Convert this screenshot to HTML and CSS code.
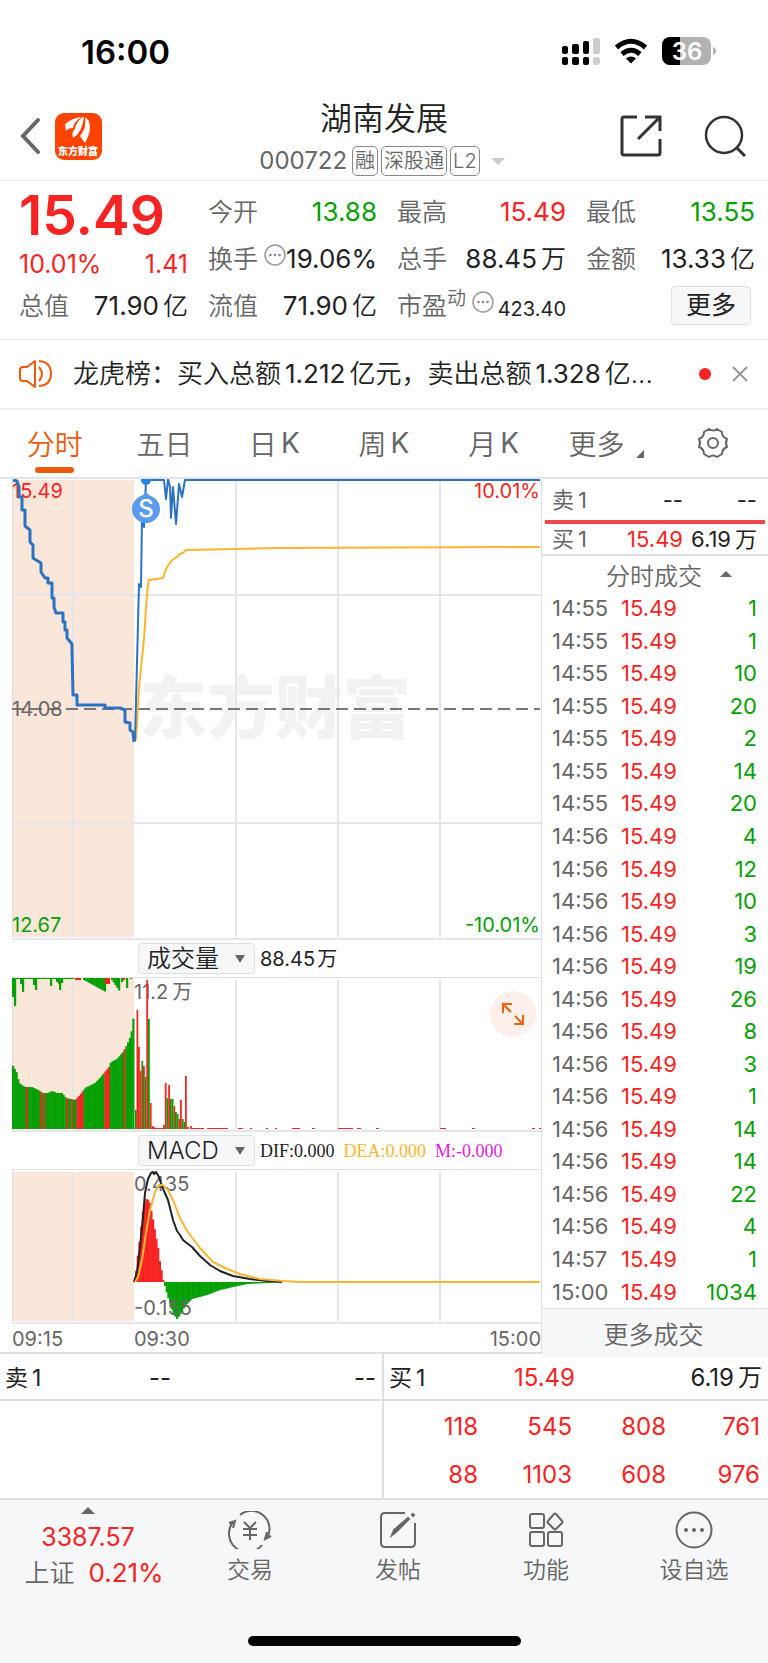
FILE: index.html
```
<!DOCTYPE html>
<html lang="zh-CN">
<head>
  <meta charset="UTF-8">
  <meta name="viewport" content="width=device-width, initial-scale=1.0">
  <title>湖南发展 000722</title>
  <link rel="stylesheet" href="styles.css">
</head>
<body>
  <div class="status">
    <span class="clock">16:00</span>
    <svg class="status-icons" width="156" height="32" viewBox="0 0 156 32">
      <g fill="#000">
        <rect x="2" y="10" width="6" height="8" rx="2"/><rect x="12" y="8" width="7" height="10" rx="2"/><rect x="23" y="5" width="6" height="13" rx="2"/>
        <rect x="2" y="21" width="6" height="8" rx="2"/><rect x="12" y="21" width="7" height="8" rx="2"/><rect x="23" y="21" width="6" height="8" rx="2"/>
      </g>
      <g fill="#ccc"><rect x="33" y="2" width="7" height="16" rx="2"/><rect x="33" y="21" width="7" height="8" rx="3"/></g>
      <g fill="none" stroke="#000" stroke-width="5">
        <path d="M56.500 11.500 Q71 -1 85.500 11.500"/>
        <path d="M62 18 Q71 10.500 80 18"/>
      </g>
      <path d="M66 22.500 Q71 18.500 76 22.500 L71 27.500 Z"/>
      <rect x="102" y="1" width="49" height="28" rx="8" fill="#b2b2b2"/>
      <path d="M110 1 H120 V29 H110 A8 8 0 0 1 102 21 V9 A8 8 0 0 1 110 1 Z"/>
      <path d="M153 11 Q156 12 156 15 Q156 18 153 19 Z" fill="#b2b2b2"/>
      <text class="battery-text" x="127" y="24" text-anchor="middle">36</text>
    </svg>
  </div>

  <header class="header">
    <div class="header-side">
      <button class="icon-btn" aria-label="返回">
        <svg width="22" height="38" viewBox="0 0 22 38"><path d="M19 3 L4 19 L19 35" fill="none" stroke="#666" stroke-width="4" stroke-linecap="round"/></svg>
      </button>
      <svg class="logo" width="47" height="47" viewBox="0 0 47 47">
        <rect width="47" height="47" rx="9" fill="#ff4300"/>
        <g fill="#fff">
          <path d="M10 11 Q17 5 27 4 Q19 8 18 15 Q13 15 11 18 Z"/>
          <path d="M28 4 Q21 9 20 16 Q16 19 18 25 Q27 20 29 4 Z"/>
          <path d="M30 4 Q32 15 25 23 L30 30 Q37 18 34 8 Z"/>
        </g>
        <text class="logo-text" x="23" y="42" text-anchor="middle">东方财富</text>
      </svg>
    </div>
    <div class="title">
      <h1>湖南发展</h1>
      <div class="code"><span>000722</span><i>融</i><i>深股通</i><i>L2</i><b class="tri-down"></b></div>
    </div>
    <div class="header-side header-right">
      <button class="icon-btn" aria-label="分享">
        <svg width="42" height="42" viewBox="0 0 42 42" fill="none" stroke="#333" stroke-width="3"><path d="M17 2 H4 Q2 2 2 4 V38 Q2 40 4 40 H38 Q40 40 40 38 V24"/><path d="M25 2 H40 V16 M40 2 L18 24"/></svg>
      </button>
      <button class="icon-btn" aria-label="搜索">
        <svg width="42" height="42" viewBox="0 0 42 42" fill="none" stroke="#333" stroke-width="2.500"><circle cx="20" cy="20" r="18"/><path d="M32 32 L41 41" stroke-width="3"/></svg>
      </button>
    </div>
  </header>

  <section class="quote">
    <div>
      <p class="price red">15.49</p>
      <p class="change red"><span>10.01%</span><span>1.41</span></p>
      <p><span class="lb">总值</span><span>71.90<em>亿</em></span></p>
    </div>
    <div>
      <p><span class="lb">今开</span><span class="green">13.88</span></p>
      <p><span class="lb">换手<svg class="dots" width="22" height="22" viewBox="0 0 22 22"><circle cx="11" cy="11" r="10" fill="none" stroke="#999" stroke-width="1.500"/><g fill="#888"><circle cx="6.500" cy="11" r="1.300"/><circle cx="11" cy="11" r="1.300"/><circle cx="15.500" cy="11" r="1.300"/></g></svg></span><span>19.06%</span></p>
      <p><span class="lb">流值</span><span>71.90<em>亿</em></span></p>
    </div>
    <div>
      <p><span class="lb">最高</span><span class="red">15.49</span></p>
      <p><span class="lb">总手</span><span>88.45<em>万</em></span></p>
      <p><span class="lb">市盈<sup>动</sup><svg class="dots" width="22" height="22" viewBox="0 0 22 22"><circle cx="11" cy="11" r="10" fill="none" stroke="#999" stroke-width="1.500"/><g fill="#888"><circle cx="6.500" cy="11" r="1.300"/><circle cx="11" cy="11" r="1.300"/><circle cx="15.500" cy="11" r="1.300"/></g></svg></span><span class="small">423.40</span></p>
    </div>
    <div>
      <p><span class="lb">最低</span><span class="green">13.55</span></p>
      <p><span class="lb">金额</span><span>13.33<em>亿</em></span></p>
      <p class="more-row"><button class="more-btn">更多</button></p>
    </div>
  </section>

  <section class="news">
    <svg width="34" height="30" viewBox="0 0 34 30" fill="none" stroke="#ee5a0a" stroke-width="2"><path d="M16 2 V28 L8 22 H4 Q1 22 1 19 V11 Q1 8 4 8 H8 Z" stroke-linejoin="round"/><path d="M20 8 Q26 15 20 22"/><path d="M20 2 Q32 3 32 15 Q32 26 20 27"/></svg>
    <a href="#">龙虎榜：买入总额<em>1.212</em>亿元，卖出总额<em>1.328</em>亿<span>...</span></a>
    <b class="dot"></b>
    <button class="icon-btn" aria-label="关闭"><svg width="18" height="18" viewBox="0 0 18 18"><path d="M2 2 L16 16 M16 2 L2 16" stroke="#999" stroke-width="2"/></svg></button>
  </section>

  <nav class="tabs">
    <button class="active">分时</button>
    <button>五日</button>
    <button>日<em>K</em></button>
    <button>周<em>K</em></button>
    <button>月<em>K</em></button>
    <button class="more-tab">更多<svg class="corner" width="8" height="8" viewBox="0 0 8 8"><path d="M8 0 V8 H0 Z" fill="#666"/></svg></button>
    <button aria-label="设置"><svg width="32" height="32" viewBox="0 0 32 32" fill="none" stroke="#666" stroke-width="2"><circle cx="16" cy="16" r="5"/><path d="M12 2 Q16 5 20 2 L25 5 Q25 10 30 12 Q28 16 30 20 Q25 22 25 27 L20 30 Q16 27 12 30 L7 27 Q7 22 2 20 Q4 16 2 12 Q7 10 7 5 Z" stroke-linejoin="round"/></svg></button>
  </nav>

  <main class="main">
    <section class="charts">
      <svg class="pane" viewBox="0 0 529 459">
        <rect x="0" y="1" width="122" height="457" fill="#fbe6da"/>
        <text class="watermark" x="127" y="254">东方财富</text>
        <path class="grid" d="M61 1 V458 M224 1 V458 M326 1 V458 M428 1 V458 M0 116 H529 M0 344 H529"/>
        <path class="edge" d="M0.500 0 V459"/>
        <path d="M0 230 H528" stroke="#777" stroke-width="2" stroke-dasharray="12 6"/>
        <text class="axis red" x="0" y="19">15.49</text>
        <text class="axis red" x="528" y="19" text-anchor="end">10.01%</text>
        <text class="axis gray" x="0" y="237">14.08</text>
        <text class="axis green" x="0" y="453">12.67</text>
        <text class="axis green" x="528" y="453" text-anchor="end">-10.01%</text>
        <g fill="none" stroke-width="2" stroke-linejoin="round">
          <polyline stroke="#ffb52b" points="124,261 127,208 132,160 134,128 136,105 137,101 151,99 154,90 159,82 166,77 168,75 171,74 174,71 224,70 268,69 528,68"/>
          <polyline stroke="#2b73c2" stroke-width="3" points="1,1 5,2 7,8 7,18 10,18 10,31 13,31 13,47 18,51 18,63 21,66 21,79 29,84 29,93 33,99 36,99 36,104 40,104 40,119 42,119 42,128 44,134 51,134 51,143 53,143 53,151 55,151 55,159 60,165 60,169 61,216 65,216 65,226 93,226 93,229 108,229 113,231 113,243 118,244 118,251 121,253 122,263"/>
          <polyline stroke="#2b73c2" points="123,262 127,105 129,108 130,38 132,48 134,1 152,1 154,20 156,0 158,8 159,39 161,8 164,45 167,5 170,18 173,1 528,1"/>
          <circle cx="134" cy="1" r="5" fill="#2f80e8"/>
          <path d="M134 13 Q136 16 141 18 A14 14 0 1 1 127 18 Q132 16 134 13 Z" fill="#5a9bee"/>
        </g>
        <text class="marker" x="134" y="38" text-anchor="middle">S</text>
      </svg>

      <div class="indicator">
        <label class="pick"><select aria-label="副图指标一"><option>成交量</option></select></label>
        <span>88.45<em>万</em></span>
      </div>
      <div class="volume">
        <svg class="pane" viewBox="0 0 529 152">
          <rect width="122" height="151" fill="#fbe6da"/>
          <path class="grid" d="M61 2 V151 M224 2 V151 M326 2 V151 M428 2 V151"/>
          <path class="edge" d="M0.500 0 V152"/>
          <text class="axis gray" x="122" y="21">11.2<tspan dx="4">万</tspan></text>
          <g id="volumeBars"></g>
        </svg>
        <button class="expand" aria-label="全屏"><svg width="24" height="24" viewBox="0 0 24 24" fill="none" stroke="#f2600c" stroke-width="2"><path d="M11 2 H2 V11 M2 2 L10 10 M22 13 V22 H13 M22 22 L14 14"/></svg></button>
      </div>

      <div class="indicator">
        <label class="pick"><select aria-label="副图指标二"><option>MACD</option></select></label>
        <span class="macd"><span>DIF:0.000</span><span class="dea">DEA:0.000</span><span class="m">M:-0.000</span></span>
      </div>
      <svg class="pane" viewBox="0 0 529 152">
        <rect y="2" width="122" height="149" fill="#fbe6da"/>
        <path class="grid" d="M61 2 V151 M224 2 V151 M326 2 V151 M428 2 V151"/>
        <path class="edge" d="M0.500 0 V152"/>
        <g id="macdBars"></g>
        <text class="axis gray" x="122" y="21">0.435</text>
        <text class="axis gray" x="122" y="145">-0.155</text>
        <g fill="none" stroke-width="2" stroke-linejoin="round">
          <polyline stroke="#222" points="122,112 125,102 128,77 131,47 133,23 136,9 139,3 141,2 142,4 144,2 147,7 149,13 152,21 156,30 159,42 161,50 165,61 168,65 171,70 180,77 188,86 198,95 208,101 221,106 238,109 255,111 270,112"/>
          <polyline stroke="#f9b531" points="123,112 126,107 130,90 134,63 138,40 143,22 147,15 151,15 156,20 161,30 168,48 175,61 188,78 201,92 215,99 228,104 248,109 271,111 288,112 528,112"/>
        </g>
      </svg>
      <div class="times"><span>09:15</span><span>09:30</span><span>15:00</span></div>
    </section>

    <aside class="side">
      <p class="ask"><span>卖<em>1</em></span><b>--</b><b>--</b></p>
      <p class="bid"><span>买<em>1</em></span><b class="red">15.49</b><b>6.19<em>万</em></b></p>
      <h2>分时成交<b class="tri-up"></b></h2>
      <div class="trades">
        <table><tbody id="trades"></tbody></table>
      </div>
      <button class="more-trades">更多成交</button>
    </aside>
  </main>

  <section class="book">
    <div class="book-half">
      <p class="level"><span>卖<em>1</em></span><span>--</span><span>--</span></p>
    </div>
    <div class="book-half">
      <p class="level"><span>买<em>1</em></span><span class="red">15.49</span><span>6.19<em>万</em></span></p>
      <table class="queue">
        <tr><td>118</td><td>545</td><td>808</td><td>761</td></tr>
        <tr><td>88</td><td>1103</td><td>608</td><td>976</td></tr>
      </table>
    </div>
  </section>

  <footer class="footer">
    <nav class="bottom">
      <a href="#" class="index"><b class="tri-up"></b><span class="red">3387.57</span><span class="index-name">上证<em class="red">0.21%</em></span></a>
      <a href="#"><svg width="44" height="38" viewBox="0 0 44 38" fill="none" stroke="#666" stroke-width="2"><path d="M12 4 A18 18 0 0 1 39 27 M34 34 A18 18 0 0 1 5 11 M1 12 L7 10 L5 17 M43 25 L37 28 L39 21"/><path d="M16 11 L22 17 L28 11 M22 17 V29 M15 18 H29 M15 24 H29"/></svg>交易</a>
      <a href="#"><svg width="38" height="38" viewBox="0 0 38 38" fill="none" stroke="#666" stroke-width="2"><path d="M26 2 H6 Q2 2 2 6 V32 Q2 36 6 36 H32 Q36 36 36 32 V12"/><path d="M13 24 L15 19 L29 7 L30 8 L17 21 Z M33 4 L34 3 L35 4 L34 5 Z" fill="#666"/></svg>发帖</a>
      <a href="#"><svg width="38" height="38" viewBox="0 0 38 38" fill="none" stroke="#666" stroke-width="2"><rect x="3" y="3" width="14" height="14" rx="2"/><rect x="3" y="21" width="14" height="14" rx="2"/><rect x="21" y="21" width="14" height="14" rx="2"/><path d="M27 3 Q28 2 29 3 L35 10 Q36 11 35 12 L29 18 Q28 19 27 18 L21 12 Q20 11 21 10 Z"/></svg>功能</a>
      <a href="#"><svg width="38" height="38" viewBox="0 0 38 38"><circle cx="19" cy="19" r="17.500" fill="none" stroke="#666" stroke-width="2"/><g fill="#666"><circle cx="11" cy="19" r="2"/><circle cx="19" cy="19" r="2"/><circle cx="27" cy="19" r="2"/></g></svg>设自选</a>
    </nav>
    <div class="home-bar"></div>
  </footer>

  <script>
  const RED = "#f82323";
  const GREEN = "#05a005";

  // 分时成交
  const trades = [
    ["14:55", [1, 1, 10, 20, 2, 14, 20]],
    ["14:56", [4, 12, 10, 3, 19, 26, 8, 3, 1, 14, 14, 22, 4]],
    ["14:57", [1]],
    ["15:00", [1034]]
  ];
  document.getElementById("trades").innerHTML = trades.map(([time, list]) =>
    list.map(n => `<tr><td>${time}</td><td class="red">15.49</td><td class="green">${n}</td></tr>`).join("")
  ).join("");

  // 折线插值
  function at(points, x) {
    for (let i = 1; i < points.length; i++) {
      const [x0, y0] = points[i - 1];
      const [x1, y1] = points[i];
      if (x <= x1) return y0 + (y1 - y0) * (x - x0) / (x1 - x0);
    }
    return points[points.length - 1][1];
  }

  function bar(x, top, bottom, color, w = 2.2) {
    return `<rect x="${x.toFixed(1)}" y="${top.toFixed(1)}" width="${w}" height="${Math.max(bottom - top, 0).toFixed(1)}" fill="${color}"/>`;
  }

  // 集合竞价
  const auction = [[0, 86], [5, 95], [7, 105], [13, 109], [20, 109], [26, 112], [31, 115], [36, 115], [40, 113], [45, 115], [50, 115], [54, 120], [63, 122], [68, 117], [73, 110], [83, 105], [88, 100], [97, 89], [99, 84], [105, 81], [111, 74], [115, 67], [119, 57], [120, 50], [122, 35]];
  const reds = [[13, 15], [27, 29], [31, 33], [53, 55], [59, 61], [63, 70], [92, 97], [111, 112.5]];
  const step = 122 / 70;
  let html = "";
  for (let i = 0; i < 70; i++) {
    const x = i * step;
    const red = reds.some(([a, b]) => x >= a && x < b);
    html += bar(x, at(auction, x + 1), 151, red ? RED : GREEN);
  }
  const hanging = [[0, 19], [2, 28], [8, 6], [10, 14], [21, 7], [23, 12], [38, 8], [44, 4], [46, 6], [47, 12], [49, 5], [109, 4], [114, 10], [118, 1]];
  hanging.forEach(([x, d]) => html += bar(x, 0, d, GREEN));
  html += bar(0, 0, 1, GREEN, 62);
  for (let x = 71; x < 93; x += step) html += bar(x, 0, 2 + (x - 71) * .55, GREEN);
  for (let x = 99; x < 107; x += step) html += bar(x, 0, 2 + (x - 99) * 1.5, GREEN);
  html += bar(63, 0, 2, RED, 6) + bar(93, 0, 6, RED, 5) + bar(111, 0, 2, RED);

  // 连续竞价
  const volumes = [[123, 132, 0], [124.5, 32, 1], [126, 69, 1], [127.7, 93, 1], [129.4, 83, 0], [131, 88, 1], [132.7, 99, 0], [134.3, 2, 1], [136, 41, 0], [137.8, 125, 1], [139.5, 148, 1], [141, 149, 1], [151, 147, 1], [152.8, 105, 1], [154.5, 120, 0], [156.2, 107, 1], [158, 121, 0], [159.7, 121, 0], [161.4, 128, 1], [163, 134, 0], [164.8, 136, 0], [166.5, 141, 1], [168, 122, 1], [169.8, 141, 0], [171.5, 144, 0], [173, 98, 1], [175, 149, 1], [178, 148, 1]];
  volumes.forEach(([x, y, up]) => html += bar(x, y, 151, up ? RED : GREEN, 1.8));
  html += bar(142, 150, 151, RED, 9);
  [[180, 12], [195, 9], [204, 12], [226, 5], [238, 2], [254, 2], [263, 2], [280, 8], [300, 3], [326, 15], [345, 4], [364, 3], [428, 6], [460, 3], [520, 3], [527, 2]].forEach(([x, w]) => html += bar(x, 150, 151, RED, w));
  document.getElementById("volumeBars").innerHTML = html;

  // MACD 柱
  const up = [[123, 110], [126, 83], [128, 67], [131, 40], [134, 29], [137, 30], [140, 44], [142, 55], [144, 67], [146, 77], [147, 87], [149, 97], [151, 110]];
  const down = [[152, 112], [154, 120], [156, 127], [158, 133], [160, 140], [162, 145], [165, 149], [168, 145], [171, 140], [173, 136], [180, 129], [195, 125], [208, 120], [221, 117], [235, 114], [255, 113], [272, 112]];
  let macd = "";
  for (let x = 123; x < 151; x += 1.7) macd += bar(x, at(up, x + 1), 112, RED);
  for (let x = 152; x < 270; x += 1.7) macd += bar(x, 112, at(down, x + 1), GREEN);
  document.getElementById("macdBars").innerHTML = macd;
  </script>
</body>
</html>
```

FILE: styles.css
```
* {
  box-sizing: border-box;
}
body {
  margin: 0;
  background: #fff;
  color: #222;
  font-family: Inter, "Noto Sans CJK SC", sans-serif;
  font-size: 24px;
}
h1, h2, p {
  margin: 0;
  font-weight: 400;
}
b, em, i {
  font-weight: 400;
  font-style: normal;
}
a {
  color: inherit;
  text-decoration: none;
}
button, select {
  font: inherit;
  color: inherit;
  border: 0;
  background: none;
  padding: 0;
}
svg {
  display: block;
}
em {
  margin-left: 4px;
}
.red { color: #f82323; fill: #f82323; }
.green { color: #05a005; fill: #05a005; }
.gray { fill: #666; }

.status {
  display: flex;
  justify-content: space-between;
  align-items: center;
  height: 103px;
  padding: 0 52px 0 81px;
}
.clock {
  font-size: 33px;
  font-weight: 600;
  color: #000;
}
.battery-text {
  font-size: 24px;
  font-weight: 600;
  fill: #fff;
}

.header {
  display: flex;
  justify-content: space-between;
  height: 78px;
  border-bottom: 1px solid #eee;
}
.header-side {
  display: flex;
  align-items: center;
  width: 180px;
  height: 66px;
  padding-left: 19px;
  gap: 14px;
}
.header-right {
  justify-content: flex-end;
  padding: 0 22px 0 0;
  gap: 42px;
}
.logo-text {
  font-family: "Noto Sans CJK SC", sans-serif;
  font-size: 10px;
  font-weight: 900;
  fill: #fff;
}
.title {
  text-align: center;
}
.title h1 {
  font-size: 32px;
  font-weight: 350;
  line-height: 32px;
}
.code {
  display: flex;
  align-items: center;
  gap: 3px;
  margin-top: 11px;
  padding-right: 4px;
  color: #666;
}
.code span {
  margin-right: 2px;
  font-size: 24px;
  line-height: 30px;
}
.code i {
  height: 30px;
  padding: 0 2px;
  border: 1px solid #888;
  border-radius: 5px;
  font-size: 20px;
  font-weight: 350;
  line-height: 28px;
}
.tri-down {
  margin-left: 8px;
  border: 7px solid transparent;
  border-top-color: #ccc;
  border-bottom: 0;
}
.tri-up {
  border: 7px solid transparent;
  border-bottom-color: #666;
  border-top: 0;
}

.quote {
  display: grid;
  grid-template-columns: repeat(4, minmax(0, 1fr));
  gap: 20px;
  padding: 7px 13px 10px 19px;
  border-bottom: 1px solid #e6e6e8;
  font-size: 26px;
  line-height: 32px;
}
.quote p {
  display: flex;
  justify-content: space-between;
  align-items: center;
  height: 47px;
  white-space: nowrap;
}
.quote em {
  font-size: 25px;
  font-weight: 350;
}
.quote .price {
  height: 58px;
  padding-bottom: 4px;
  font-size: 55px;
  font-weight: 600;
}
.quote .change {
  height: 36px;
}
.change span {
  font-size: 25px;
}
.lb {
  display: flex;
  color: #666;
  font-size: 25px;
  font-weight: 350;
}
.lb sup {
  font-size: 19px;
  line-height: 18px;
  vertical-align: top;
}
.dots {
  flex: none;
  margin: 1px 0 0 6px;
}
.quote .small {
  padding-top: 6px;
  font-size: 20px;
}
.quote .more-row {
  justify-content: flex-end;
}
.more-btn {
  width: 80px;
  height: 39px;
  margin-right: 4px;
  border: 1px solid #dcdfe4;
  border-radius: 4px;
  background: #f6f7f9;
  font-size: 25px;
  line-height: 35px;
}

.news {
  display: flex;
  align-items: center;
  height: 70px;
  padding: 0 19px;
  border-bottom: 2px solid #efeff1;
}
.news a {
  flex: 1;
  margin-left: 20px;
  font-size: 26px;
  font-weight: 350;
  line-height: 32px;
  white-space: nowrap;
}
.news em {
  margin: 0 4px;
}
.dot {
  width: 12px;
  height: 12px;
  margin-right: 20px;
  border-radius: 50%;
  background: #f82323;
}

.tabs {
  display: grid;
  grid-template-columns: repeat(7, 1fr);
  height: 69px;
  border-bottom: 2px solid #e2e4ea;
}
.tabs button {
  position: relative;
  display: flex;
  justify-content: center;
  align-items: center;
  padding-bottom: 2px;
  color: #666;
  font-size: 28px;
  font-weight: 350;
}
.tabs .active {
  color: #ee5a0a;
}
.tabs .active::after {
  content: "";
  position: absolute;
  bottom: 4px;
  width: 39px;
  height: 6px;
  border-radius: 3px;
  background: #ee5a0a;
}
.tabs .more-tab {
  padding-left: 6px;
}
.tabs .corner {
  margin: 22px 0 0 12px;
}

.main {
  display: grid;
  grid-template-columns: minmax(0, 1fr) 226px;
}
.charts {
  padding-left: 12px;
  border-right: 1px solid #dcdfe6;
}
.pane {
  width: 100%;
  border-bottom: 2px solid #e4e6eb;
}
.grid {
  stroke: #e3e6ec;
  stroke-width: 2;
}
.edge {
  stroke: #dcdfe6;
}
.axis {
  font-size: 20px;
}
.watermark {
  font-size: 68px;
  font-weight: 900;
  fill: #f2f2f2;
}
.marker {
  font-size: 24px;
  font-weight: 500;
  fill: #fff;
}
.indicator {
  display: flex;
  align-items: center;
  gap: 5px;
  height: 38px;
  padding-left: 126px;
  border-bottom: 1px solid #dfe2e7;
  font-size: 20px;
  line-height: 28px;
}
.indicator em {
  margin-left: 2px;
}
.pick {
  position: relative;
}
.pick select {
  appearance: none;
  display: block;
  width: 117px;
  height: 31px;
  padding-left: 8px;
  border: 1px solid #dcdfe4;
  border-radius: 4px;
  background: #f6f7f9;
  font-size: 24px;
  font-weight: 350;
  line-height: 28px;
}
.pick::after {
  content: "";
  position: absolute;
  top: 12px;
  right: 10px;
  border: 5px solid transparent;
  border-top: 8px solid #666;
  border-bottom: 0;
}
.macd {
  display: flex;
  gap: 9px;
  font-family: "Liberation Serif", serif;
  font-size: 18px;
}
.dea { color: #ffb52b; }
.m { color: #e619e6; }
.volume {
  position: relative;
}
.expand {
  position: absolute;
  top: 13px;
  right: 5px;
  display: flex;
  justify-content: center;
  align-items: center;
  width: 46px;
  height: 46px;
  border-radius: 50%;
  background: #fdf0ea;
}
.times {
  display: flex;
  height: 30px;
  margin-left: -12px;
  padding-left: 12px;
  border-bottom: 2px solid #dcdfe6;
  color: #666;
  font-size: 20px;
  line-height: 30px;
}
.times span:nth-child(1) {
  width: 122px;
}
.times span:nth-child(3) {
  margin-left: auto;
}

.side {
  display: flex;
  flex-direction: column;
  font-size: 22px;
}
.side p {
  display: grid;
  grid-template-columns: 50px 81px 1fr;
  align-items: center;
  padding: 0 11px 0 10px;
  line-height: 26px;
  text-align: right;
  white-space: nowrap;
}
.side p span {
  color: #666;
  text-align: left;
}
.side .ask {
  height: 45px;
  margin: 0 3px;
  padding: 0 8px 0 7px;
  border-bottom: 4px solid #f04848;
}
.side .bid {
  height: 32px;
  border-bottom: 2px solid #dcdfe6;
}
.side h2 {
  display: flex;
  justify-content: center;
  align-items: center;
  gap: 18px;
  height: 36px;
  padding-left: 28px;
  color: #666;
  font-size: 24px;
  font-weight: 350;
}
.side .tri-up {
  border-width: 6px;
  border-top: 0;
}
.trades {
  flex: 1;
}
.trades table {
  width: 100%;
  height: 100%;
  border-collapse: collapse;
  table-layout: fixed;
}
.trades td {
  width: 69px;
  padding: 0 0 0 10px;
  color: #666;
  line-height: 30px;
}
.trades .red {
  color: #f82323;
}
.trades .green {
  width: auto;
  padding-right: 11px;
  color: #05a005;
  text-align: right;
}
.more-trades {
  height: 49px;
  margin-bottom: -3px;
  padding-right: 3px;
  border-top: 1px solid #e2e4ea;
  background: #f6f7f9;
  color: #666;
  font-size: 25px;
  font-weight: 350;
}

.book {
  display: grid;
  grid-template-columns: 1fr 1fr;
  min-height: 146px;
  border-bottom: 2px solid #dcdfe6;
}
.book-half:first-child {
  border-right: 2px solid #dcdfe6;
}
.level {
  display: grid;
  grid-template-columns: 90px 96px 1fr;
  align-items: center;
  height: 47px;
  padding: 2px 6px 0 5px;
  border-bottom: 2px solid #dcdfe6;
  font-size: 24px;
  line-height: 30px;
}
.level span + span {
  text-align: right;
}
.level span:first-child {
  font-size: 23px;
}
.book-half:first-child .level {
  grid-template-columns: 90px 76px 1fr;
}
.queue {
  width: 100%;
  padding-right: 8px;
  border-spacing: 0;
  table-layout: fixed;
  color: #f82323;
  font-size: 24px;
  text-align: right;
}
.queue td {
  height: 48px;
  padding: 2px 0 0;
}

.footer {
  height: 163px;
  background: #f6f7f9;
}
.bottom {
  display: grid;
  grid-template-columns: 176px repeat(4, 1fr);
  height: 136px;
  color: #666;
}
.bottom a {
  display: flex;
  flex-direction: column;
  align-items: center;
  gap: 3px;
  padding-top: 11px;
  font-size: 23px;
  font-weight: 350;
  line-height: 36px;
}
.bottom .index {
  gap: 0;
  padding-top: 7px;
  font-size: 25px;
}
.index .red {
  font-weight: 400;
}
.index .tri-up {
  margin-bottom: 5px;
}
.index-name {
  padding-left: 12px;
}
.index em {
  margin-left: 14px;
  font-size: 26px;
}
.home-bar {
  width: 273px;
  height: 10px;
  margin: 0 auto;
  border-radius: 5px;
  background: #000;
}
```
